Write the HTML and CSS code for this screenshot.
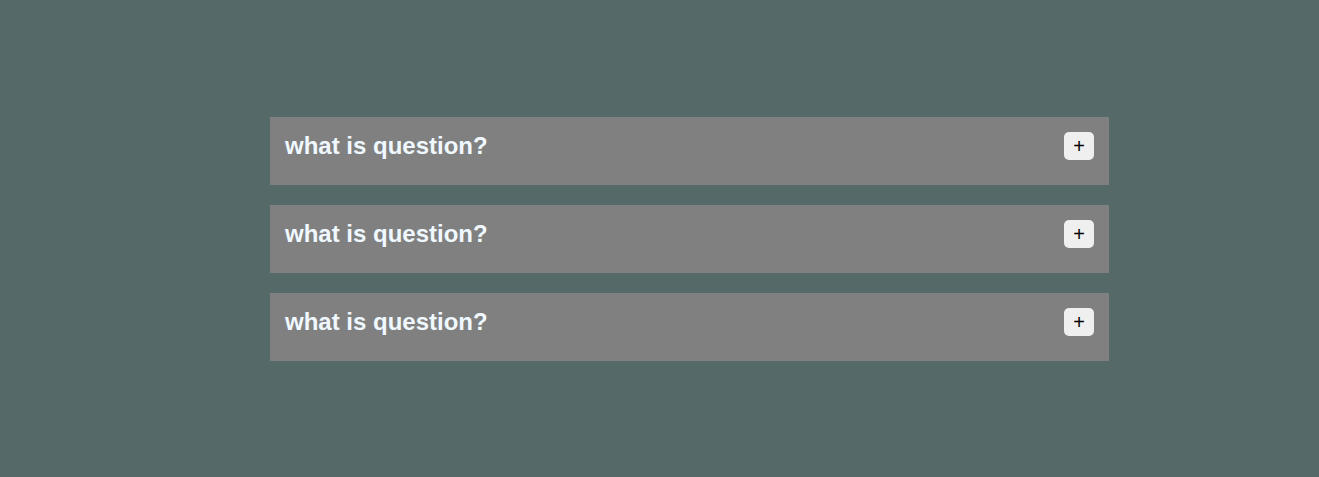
FILE: index.html
```html
<!DOCTYPE html>
<html>
<head>
<meta charset="utf-8">
<link rel="stylesheet" href="styles.css">
</head>
<body>
<div class="faq">
  <div class="item">
    <h3 class="q">what is question?</h3>
    <button class="toggle">+</button>
  </div>
  <div class="item">
    <h3 class="q">what is question?</h3>
    <button class="toggle">+</button>
  </div>
  <div class="item">
    <h3 class="q">what is question?</h3>
    <button class="toggle">+</button>
  </div>
</div>
</body>
</html>
```
FILE: styles.css
```css
html, body {
  margin: 0;
  padding: 0;
}
body {
  background: #556a68;
  font-family: "Liberation Sans", Arial, sans-serif;
  height: 477px;
}
.faq {
  display: flex;
  flex-direction: column;
  gap: 20px;
  padding-top: 117px;
  margin-left: 270px;
  width: 839px;
}
.item {
  box-sizing: border-box;
  height: 68px;
  background: #808080;
  padding: 15px;
  display: flex;
  justify-content: space-between;
  align-items: flex-start;
}
.q {
  margin: 0;
  font-size: 24px;
  font-weight: bold;
  color: #f0f8ff;
  line-height: normal;
}
.toggle {
  width: 30px;
  height: 28px;
  border: none;
  border-radius: 5px;
  background: #efefef;
  color: #000;
  font-family: "Liberation Sans", Arial, sans-serif;
  font-size: 20px;
  line-height: 1;
  padding: 0;
}
```
